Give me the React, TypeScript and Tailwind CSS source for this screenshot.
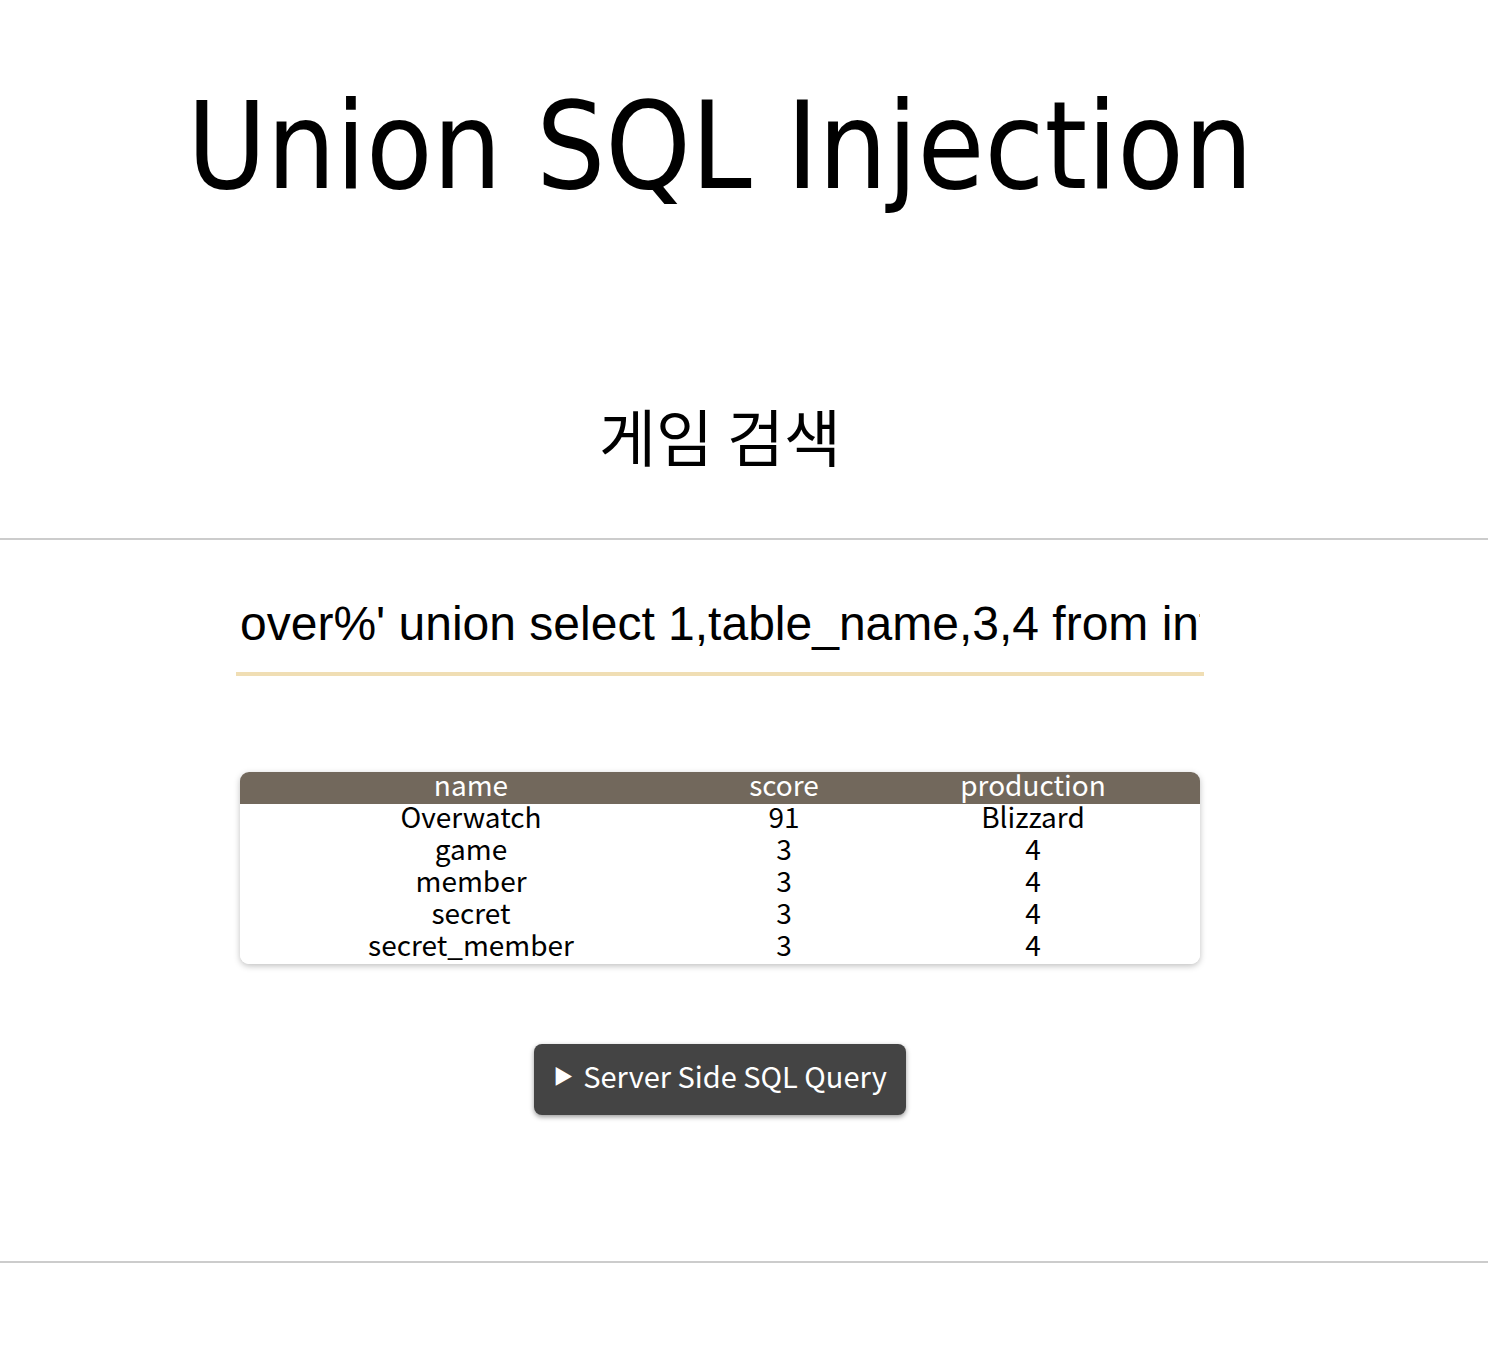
const rows = [
  { name: "Overwatch", score: "91", production: "Blizzard" },
  { name: "game", score: "3", production: "4" },
  { name: "member", score: "3", production: "4" },
  { name: "secret", score: "3", production: "4" },
  { name: "secret_member", score: "3", production: "4" },
];

const query = "over%' union select 1,table_name,3,4 from information_schema.tables#";

export default function App() {
  return (
    <div className="w-[1440px] min-h-[1354px] bg-white text-black">
      <h1 className="pt-[86px] text-center text-[121px] leading-none font-normal [font-family:'DejaVu_Sans_Condensed','DejaVu_Sans',sans-serif] [font-stretch:condensed]">
        Union SQL Injection
      </h1>

      <h2 className="mt-[186px] text-center text-[62px] leading-[84px] font-normal [font-family:'Noto_Sans_CJK_KR',sans-serif]">
        게임 검색
      </h2>

      <div className="w-[1488px] mt-[61px] h-[2px] bg-[#cccccc]" />

      <div className="mt-[50px] flex justify-center">
        <input
          readOnly
          value={query}
          className="w-[968px] h-[86px] px-1 pb-[16px] border-b-4 border-[#f0deb4] outline-none bg-transparent text-[48px] [font-family:'Liberation_Sans',Arial,sans-serif]"
        />
      </div>

      <div className="mt-[96px] flex justify-center">
        <div className="w-[960px] rounded-[9px] overflow-hidden shadow-[0_2px_6px_rgba(0,0,0,0.25)] [font-family:'Noto_Sans_CJK_KR',sans-serif] text-[28px] leading-[24px]">
          <div className="grid grid-cols-[462px_164px_334px] h-8 pb-2 bg-[#72685c] text-white text-center">
            <div>name</div>
            <div>score</div>
            <div>production</div>
          </div>
          {rows.map((r) => (
            <div key={r.name} className="grid grid-cols-[462px_164px_334px] h-8 pb-2 bg-white text-center">
              <div>{r.name}</div>
              <div>{r.score}</div>
              <div>{r.production}</div>
            </div>
          ))}
        </div>
      </div>

      <div className="mt-[80px] flex justify-center">
        <button className="w-[372px] h-[71px] pb-2 rounded-lg bg-[#444444] text-white text-[29px] shadow-[0_2px_5px_rgba(0,0,0,0.4)] flex items-center justify-center gap-[10px] [font-family:'Noto_Sans_CJK_KR',sans-serif]">
          <span className="text-[20px]">▶</span>
          <span>Server Side SQL Query</span>
        </button>
      </div>

      <div className="w-[1488px] mt-[146px] h-[2px] bg-[#cccccc]" />
    </div>
  );
}
